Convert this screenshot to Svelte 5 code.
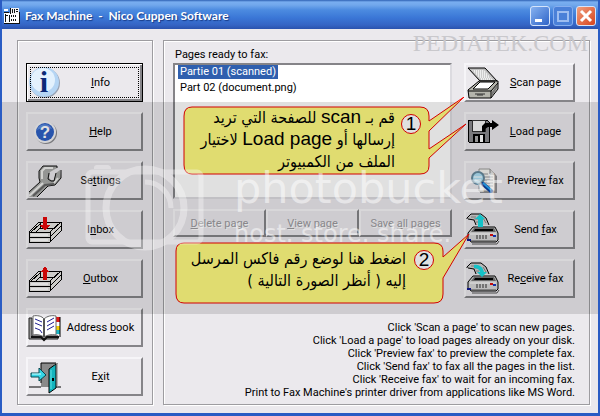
<script>
    let selected = $state(0);

    const pages = ["Partie 01 (scanned)", "Part 02 (document.png)"];

    // [before, access key, after]
    const menu = [
        { icon: "info", label: ["", "I", "nfo"] },
        { icon: "help", label: ["", "H", "elp"] },
        { icon: "settings", label: ["Se", "t", "tings"] },
        { icon: "inbox", label: ["I", "n", "box"] },
        { icon: "outbox", label: ["", "O", "utbox"] },
        { icon: "book", label: ["Address ", "b", "ook"] },
        { icon: "exit", label: ["E", "x", "it"] },
    ];

    const actions = [
        { icon: "scan", label: ["", "S", "can page"] },
        { icon: "load", label: ["", "L", "oad page"] },
        { icon: "preview", label: ["Previe", "w", " fax"] },
        { icon: "send", label: ["Send ", "f", "ax"] },
        { icon: "receive", label: ["Re", "c", "eive fax"] },
    ];

    const pageActions = [
        ["", "D", "elete page"],
        ["", "V", "iew page"],
        ["Save ", "a", "ll pages"],
    ];

    const hints = [
        "Click 'Scan a page' to scan new pages.",
        "Click 'Load a page' to load pages already on your disk.",
        "Click 'Preview fax' to preview the complete fax.",
        "Click 'Send fax' to fax all the pages in the list.",
        "Click 'Receive fax' to wait for an incoming fax.",
        "Print to Fax Machine's printer driver from applications like MS Word.",
    ];
</script>

{#snippet caption([before, key, after])}
    <span class="caption">{before}<u>{key}</u>{after}</span>
{/snippet}

{#snippet tray()}
    <path d="M0 18 10 8H32V17L21 28H0Z" fill="#e9e8e4" stroke="#000" />
    <path d="M0 18H21L32 8M21 18V28M0 23H21L32 12M2 18 11 10V14L7 18M11 14H26" fill="none" stroke="#000" />
    <path d="M2 21H19M2 26H19" stroke="#fff" stroke-width="2" />
{/snippet}

{#snippet faxBody()}
    <path d="M0 4 4 0H14L19 4 22 11H9L7 6 1 5Z" fill="#d2d2d2" />
    <path d="M0 5V4L4 0H14L19 4 22 11M1 5 7 6 9 11" fill="none" stroke="#000" />
    <path d="M4 3H9M7 5H11M9 8H12M16 4 19 9" fill="none" stroke="#888" />
    <path d="M6 13H28L31 19V26L29 28H4L1 25V19Z" fill="#d8d8d8" stroke="#000" />
    <path d="M7 14H27L29 18H4Z" fill="#777" />
    <path d="M8 15H26V17H7Z" fill="#000" />
    <path d="M3 20H29" stroke="#fff" />
    <path d="M9 22H21M9 24H21" stroke="#333" stroke-dasharray="2 1" />
    <path d="M23 20h3v2h-3z" fill="#e01010" />
    <path d="M26 21h3v2h-3z" fill="#1838c0" />
    <path d="M3 27H29M5 30H30L32 27" stroke="#555" fill="none" />
    <path d="M0 25h4v2H0z" fill="#101890" />
{/snippet}

{#snippet picture(name)}
    <svg class="icon" viewBox="0 0 32 32" aria-hidden="true">
        {#if name === "info"}
            <circle cx="16" cy="16" r="15" fill="#9aa4b5" />
            <circle cx="15" cy="15" r="15" fill="#b5d5f4" />
            <circle cx="14" cy="13" r="12" fill="#e3f1fd" />
            <text x="15" y="25" text-anchor="middle" class="glyph-i">i</text>
        {:else if name === "help"}
            <circle cx="17" cy="17" r="11" fill="#8b8b90" />
            <circle cx="16" cy="16" r="11" fill="#f2f2f4" />
            <circle cx="16" cy="16" r="9" fill="#2e60c4" />
            <path d="M8 14A8 8 0 0 1 23 13 18 18 0 0 0 8 14Z" fill="#5d8cdf" />
            <text x="16" y="22" text-anchor="middle" class="glyph-q">?</text>
        {:else if name === "settings"}
            <path d="M0 27 11 17 10 13V6L14 1H28V3L21 7 20 13 22 15H25L27 8 31 5 32 13 26 20 19 21 8 32H0Z" fill="#a9aaa8" />
            <path d="M0 31 14 18M13 14V6L16 3H24M25 18 29 13" fill="none" stroke="#eeeeec" stroke-width="2" />
            <path d="M0 27 11 17 10 13V6L14 1H28V3M20 8 19 14 22 16H25L27 8M32 5V13L26 20 19 21 8 32" fill="none" stroke="#111" />
            <path d="M4 31 16 20 25 19" fill="none" stroke="#666" stroke-width="2" />
        {:else if name === "inbox"}
            <g shape-rendering="crispEdges">
                {@render tray()}
                <path d="M14 3H18V11H21L16 17 11 11H14Z" fill="#e80808" />
            </g>
        {:else if name === "outbox"}
            <g shape-rendering="crispEdges">
                {@render tray()}
                <path d="M16 3 20 9H18V17H14V9H12Z" fill="#e80808" />
            </g>
        {:else if name === "book"}
            <path d="M0 6H3V24H29V27H0Z" fill="#999" stroke="#222" />
            <path d="M27 5h4v5h-4z" fill="#e01818" />
            <path d="M27 10h4v4h-4z" fill="#fff" />
            <path d="M27 14h4v4h-4z" fill="#f4d000" />
            <path d="M27 18h4v4h-4z" fill="#18b8c8" />
            <path d="M31 5V25" stroke="#000" />
            <path d="M4 4C8 3 13 4 15 7 18 4 23 3 27 4V23C22 22 18 23 15 25 12 23 8 22 4 23Z" fill="#fff" stroke="#666" />
            <path d="M15 7V25" stroke="#555" stroke-width="2" />
            <path d="M6 7 13 10M6 11 13 14M6 16 11 18 13 21M18 10 25 6M18 14 25 10M18 18 25 14" stroke="#202090" fill="none" />
            <path d="M2 25H12L15 28 18 25H30" stroke="#111" stroke-width="2" fill="none" />
        {:else if name === "exit"}
            <path d="M0 26H12M26 26H32" stroke="#000" />
            <path d="M12 2H29V26H12Z" fill="#8a8a8a" />
            <path d="M27 3V25" stroke="#d8d8d8" stroke-width="3" />
            <path d="M12 22V2H27" stroke="#000" fill="none" />
            <path d="M20 8 27 3V27L20 32Z" fill="#14b4bd" stroke="#000" />
            <path d="M22 9V28" stroke="#61e2e5" />
            <path d="M23 17h2v3h-2z" fill="#000" />
            <path d="M2 12H10V7L17 14 10 20V16H2Z" fill="#35d6e6" stroke="#064850" />
            <path d="M3 13H12" stroke="#d8ffff" />
        {:else if name === "scan"}
            <path d="M1 1H18L30 14H13Z" fill="#bdbdbd" stroke="#000" />
            <path d="M5 3H17L26 13H14Z" fill="#eee" />
            <path d="M6 4H17M8 6H19M10 8H21M12 10H23M13 12H25" stroke="#aaa" stroke-dasharray="1 1" />
            <path d="M12 14H31V22L24 31H2L1 23Z" fill="#b4b4ac" stroke="#000" />
            <path d="M13 15H28L21 22H6Z" fill="#fff" stroke="#000" />
            <path d="M1 24H24V31M24 24 31 16" fill="none" stroke="#000" />
            <path d="M25 25 30 18V21L25 29Z" fill="#777" />
            <path d="M8 27H18M10 28H16" stroke="#333" />
        {:else if name === "load"}
            <g shape-rendering="crispEdges">
                <path d="M1 4H20L22 6V26H2L1 25Z" fill="#8a8a8e" stroke="#000" />
                <path d="M5 4H18V15H5Z" fill="#f7f7f7" stroke="#333" />
                <path d="M6 18H18V26H6Z" fill="#000" />
                <path d="M8 20H11V26H8Z" fill="#aaa" />
                <path d="M13 19H16V26H13Z" fill="#fff" />
            </g>
            <path d="M15 16V10L18 7H25V4L32 9 25 14V11H21L18 13V16Z" fill="#000" />
        {:else if name === "preview"}
            <path d="M13 6H24L30 11V28H13Z" fill="#8e8e92" />
            <path d="M12 4H23L28 9V26H12Z" fill="#f5f5f2" stroke="#9b9b98" />
            <path d="M23 4V9H28" fill="#ddd" stroke="#888" />
            <path d="M15 9H21M15 12H26M15 15H26M15 18H26M15 21H26" stroke="#999" />
            <circle cx="11" cy="13" r="6" fill="#aee0f5" stroke="#66899d" stroke-width="2" />
            <path d="M7 12H15M8 15H14" stroke="#fff" />
            <path d="M16 19 24 26" stroke="#083e9c" stroke-width="4" stroke-linecap="round" />
            <path d="M16 18 24 25" stroke="#29a5f4" stroke-width="2" />
        {:else if name === "send"}
            {@render faxBody()}
            <path d="M13 0 18 5H16V13H11V5H8Z" fill="#19dce3" />
        {:else}
            {@render faxBody()}
            <path d="M7 2C12 1 16 4 17 9H20L15 14 10 9H13C12 6 10 5 7 5Z" fill="#19dce3" />
        {/if}
    </svg>
{/snippet}

<div class="window">
    <header class="titlebar">
        <svg class="app-icon" viewBox="0 0 16 16" shape-rendering="crispEdges" aria-hidden="true">
            <path d="M0 1H4V3H0ZM0 5H16V16H0Z" fill="#fff" />
            <path d="M6 0H15V6H6Z" fill="#f4f4f4" />
            <path d="M0 4H5V5H0ZM6 0H7V6H6ZM8 1H9V5H8ZM10 1H11V5H10ZM12 1H14V2H12ZM12 3H14V4H12ZM15 4H16V16H0V15H15ZM2 7H4V8H2ZM5 7H6V14H5ZM7 7H8V9H7ZM9 7H10V9H9ZM11 7H12V9H11ZM7 11H8V13H7ZM9 11H10V13H9ZM11 11H12V13H11ZM1 6H2V14H1Z" fill="#111" />
        </svg>
        <h1>Fax Machine&nbsp; -&nbsp; Nico Cuppen Software</h1>
        <div class="controls">
            <button type="button" class="control" aria-label="Minimize">
                <svg viewBox="0 0 18 18"><path d="M4 12H11V15H4Z" fill="#fff" /></svg>
            </button>
            <button type="button" class="control muted" aria-label="Maximize" disabled>
                <svg viewBox="0 0 18 18"><path d="M4 5H14V14H4Z" fill="none" stroke="#9dbdf0" stroke-width="2" /></svg>
            </button>
            <button type="button" class="control close" aria-label="Close">
                <svg viewBox="0 0 18 18"><path d="M4 4 14 14M14 4 4 14" stroke="#fff" stroke-width="3" /></svg>
            </button>
        </div>
    </header>

    <main class="content">
        <nav class="panel menu">
            {#each menu as item, i}
                <button type="button" class="button" class:focused={i === 0}>
                    {@render picture(item.icon)}
                    {@render caption(item.label)}
                </button>
            {/each}
        </nav>

        <section class="panel fax">
            <div class="workspace">
                <div class="pages">
                    <h2 id="pages-label">Pages ready to fax:</h2>
                    <ul class="list" role="listbox" aria-labelledby="pages-label">
                        {#each pages as page, i}
                            <li role="option" aria-selected={selected === i}>
                                <button type="button" class="page" class:selected={selected === i} onclick={() => (selected = i)}>{page}</button>
                            </li>
                        {/each}
                    </ul>
                    <div class="page-actions">
                        {#each pageActions as label}
                            <button type="button" class="button small" disabled>
                                {@render caption(label)}
                            </button>
                        {/each}
                    </div>
                </div>
                <div class="actions">
                    {#each actions as item}
                        <button type="button" class="button">
                            {@render picture(item.icon)}
                            {@render caption(item.label)}
                        </button>
                    {/each}
                </div>
            </div>
            <div class="hints">
                {#each hints as hint}
                    <p>{hint}</p>
                {/each}
            </div>
        </section>
    </main>

    <div class="site">PEDIATEK.COM</div>

    <div class="callout first" dir="rtl" lang="ar">
        <svg class="bubble" viewBox="0 0 286 78" aria-hidden="true">
            <path d="M9 10H237Q246 10 246 19V24L281 0 246 34V52L283 27 246 61V69Q246 77 237 77H9Q1 77 1 68V19Q1 10 9 10Z" />
        </svg>
        <span class="number">1</span>
        <p>قم بـ <span class="latin">scan</span> للصفحة التي تريد<br />إرسالها أو <span class="latin">Load page</span> لاختيار<br />الملف من الكمبيوتر</p>
    </div>

    <div class="callout second" dir="rtl" lang="ar">
        <svg class="bubble" viewBox="0 0 296 70" aria-hidden="true">
            <path d="M9 9H259Q268 9 268 17V23L294 0 268 44V60Q268 69 259 69H9Q1 69 1 60V17Q1 9 9 9Z" />
        </svg>
        <span class="number">2</span>
        <p>اضغط هنا لوضع رقم فاكس المرسل<br />إليه ( أنظر الصورة التالية )</p>
    </div>

    <div class="watermark">
        <svg class="camera" viewBox="0 0 120 88" aria-hidden="true">
            <path d="M9 4Q9 1 12 1H22Q26 1 26 5H9Z" fill="#fff" />
            <rect x="3" y="8" width="113" height="70" rx="4" fill="none" stroke="#fff" stroke-width="5" />
            <circle cx="60" cy="44" r="39" fill="none" stroke="#fff" stroke-width="7" />
            <path d="M60 18A26 26 0 0 1 86 44" fill="none" stroke="#fff" stroke-width="5" />
        </svg>
        <div class="brand">
            <strong>photobucket</strong>
            <span>host. store. share.</span>
        </div>
    </div>
</div>

<style>
    :global(body) {
        margin: 0;
        background: #ebe9ed;
    }

    .window {
        position: relative;
        box-sizing: border-box;
        min-height: 100vh;
        border: solid #2a5cc4;
        border-width: 0 2px 3px;
        background: #ebe9ed;
        color: #000;
        font-family: Roboto, "Liberation Sans", sans-serif;
        font-size: 11px;
        overflow: hidden;
    }

    h1,
    h2,
    p,
    ul {
        margin: 0;
        padding: 0;
    }

    .titlebar {
        display: flex;
        align-items: center;
        gap: 5px;
        height: 29px;
        box-sizing: border-box;
        margin: 0 -2px;
        padding: 2px 4px 0;
        background: linear-gradient(#2f62b4 0, #79aef0 2px, #72a8ec 5px, #4c8be0 10px, #3a76d6 18px, #3564c4 25px, #2a52ae 29px);
    }

    .app-icon {
        width: 16px;
        height: 16px;
    }

    h1 {
        flex: 1;
        color: #fff;
        font-family: Lato, "Trebuchet MS", sans-serif;
        font-size: 12px;
        font-weight: 700;
        text-shadow: 1px 1px 1px #173a86;
        white-space: nowrap;
    }

    .controls {
        display: flex;
        gap: 3px;
    }

    .control {
        width: 20px;
        height: 20px;
        padding: 0;
        border: 1px solid #d5e4fb;
        border-radius: 3px;
        background: linear-gradient(135deg, #86b2f0, #2f64c8);
    }

    .control svg {
        display: block;
    }

    .control.muted {
        border-color: #86aeee;
        background: #4a80d8;
    }

    .control.close {
        background: linear-gradient(135deg, #f0a080, #d8431c);
    }

    .content {
        display: flex;
        gap: 10px;
        padding: 11px 8px 8px 15px;
    }

    .panel {
        box-sizing: border-box;
        border: 1px solid #9d9ca0;
        box-shadow: 1px 1px 0 #fff, inset 1px 1px 0 #fff;
    }

    .menu,
    .actions {
        display: flex;
        flex-direction: column;
        gap: 10px;
    }

    .menu {
        flex: none;
        width: 136px;
        padding: 22px 9px 8px 8px;
    }

    .fax {
        flex: 1;
        display: flex;
        flex-direction: column;
        justify-content: space-between;
        padding: 6px 14px 5px 9px;
    }

    .button {
        display: flex;
        align-items: center;
        box-sizing: border-box;
        height: 39px;
        padding: 1px;
        border: 2px solid;
        border-color: #f6f5f8 #858488 #858488 #f6f5f8;
        background: #ebe9ed;
        color: #000;
        font: inherit;
    }

    .button.focused {
        border: 1px solid #000;
        padding: 2px;
        box-shadow: inset 1px 1px 0 #fff, inset -2px -2px 0 #858488;
        outline: 1px dotted #000;
        outline-offset: -5px;
    }

    .icon {
        flex: none;
        width: 32px;
        height: 32px;
        overflow: visible;
    }

    .glyph-i {
        fill: #0c2a78;
        font: bold 30px "Liberation Serif", serif;
    }

    .glyph-q {
        fill: #fff;
        font: bold 17px "Liberation Sans", sans-serif;
    }

    .caption {
        flex: 1;
        text-align: center;
        white-space: nowrap;
    }

    .workspace {
        display: flex;
        gap: 12px;
    }

    .pages {
        flex: 1;
    }

    h2 {
        padding-left: 2px;
        font-size: 11px;
        font-weight: 400;
        line-height: 16px;
    }

    .list {
        box-sizing: border-box;
        height: 136px;
        border: 2px solid;
        border-color: #858488 #dcdbe0 #dcdbe0 #858488;
        padding-left: 3px;
        background: #fff;
        list-style: none;
    }

    .page {
        display: block;
        margin-bottom: 2px;
        padding: 0 2px;
        border: 0;
        background: none;
        font: inherit;
        line-height: 14px;
    }

    .page.selected {
        background: #2f5fae;
        color: #fff;
    }

    .page-actions {
        display: grid;
        grid-template-columns: repeat(3, 1fr);
        margin-top: 10px;
    }

    .button.small {
        height: 28px;
    }

    .button:disabled {
        color: #9b9a9f;
        text-shadow: 1px 1px 0 #fff;
    }

    .actions {
        width: 111px;
        padding-top: 16px;
    }

    .hints {
        line-height: 13px;
        text-align: right;
    }

    .site {
        position: absolute;
        top: 28px;
        right: 10px;
        color: #c9c8cc;
        font: 24px/30px "Liberation Serif", serif;
    }

    .callout {
        position: absolute;
        display: flex;
        box-sizing: border-box;
        color: #000;
        font: 16px/22px "DejaVu Sans Condensed", "DejaVu Sans", sans-serif;
    }

    .callout.first {
        top: 97px;
        left: 181px;
        width: 246px;
        padding: 10px 8px 0 0;
        gap: 6px;
    }

    .callout.second {
        top: 234px;
        left: 173px;
        width: 268px;
        padding: 14px 9px 0 0;
        gap: 8px;
    }

    .bubble {
        position: absolute;
        top: 0;
        left: 0;
        height: auto;
        fill: #fffb80;
        stroke: #f00000;
    }

    .first .bubble {
        width: 286px;
    }

    .second .bubble {
        width: 296px;
    }

    .callout p {
        position: relative;
        white-space: nowrap;
    }

    .latin,
    .number {
        font-family: "Liberation Sans", Arial, sans-serif;
        font-size: 19px;
        line-height: 18px;
    }

    .number {
        position: relative;
        flex: none;
        box-sizing: border-box;
        width: 20px;
        height: 20px;
        margin-top: 7px;
        border: 1px solid #f00000;
        border-radius: 50%;
        background: #fff;
        text-align: center;
    }

    .second .number {
        margin-top: 2px;
    }

    .watermark {
        position: absolute;
        top: 102px;
        left: -2px;
        right: -2px;
        display: flex;
        gap: 29px;
        box-sizing: border-box;
        height: 212px;
        padding: 62px 0 0 85px;
        background: rgba(0, 0, 0, 0.12);
        pointer-events: none;
    }

    .camera {
        flex: none;
        width: 120px;
        height: 88px;
        opacity: 0.35;
    }

    .brand {
        display: flex;
        flex-direction: column;
        gap: 7px;
        color: rgba(255, 255, 255, 0.5);
        font-family: "DejaVu Sans", sans-serif;
        white-space: nowrap;
    }

    .brand strong {
        font-size: 43px;
        font-weight: 400;
        line-height: 48px;
    }

    .brand span {
        font-size: 24px;
        line-height: 30px;
    }
</style>
